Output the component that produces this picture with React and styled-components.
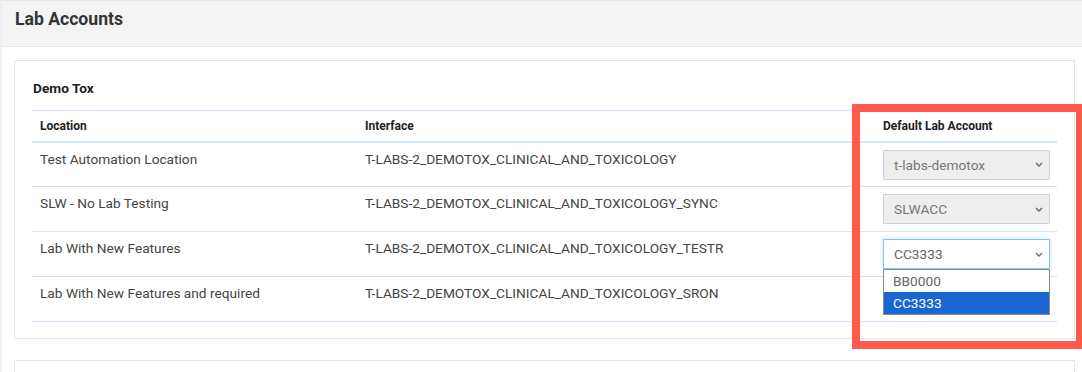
import React from "react";
import styled, { createGlobalStyle } from "styled-components";

const GlobalStyle = createGlobalStyle`
  * { box-sizing: border-box; }
  body {
    margin: 0;
    background: #fff;
    font-family: Roboto, "Liberation Sans", Arial, sans-serif;
    color: #333;
  }
`;

const rows = [
  {
    location: "Test Automation Location",
    iface: "T-LABS-2_DEMOTOX_CLINICAL_AND_TOXICOLOGY",
    account: "t-labs-demotox",
    state: "disabled",
  },
  {
    location: "SLW - No Lab Testing",
    iface: "T-LABS-2_DEMOTOX_CLINICAL_AND_TOXICOLOGY_SYNC",
    account: "SLWACC",
    state: "disabled",
  },
  {
    location: "Lab With New Features",
    iface: "T-LABS-2_DEMOTOX_CLINICAL_AND_TOXICOLOGY_TESTR",
    account: "CC3333",
    state: "open",
    options: ["BB0000", "CC3333"],
  },
  {
    location: "Lab With New Features and required",
    iface: "T-LABS-2_DEMOTOX_CLINICAL_AND_TOXICOLOGY_SRON",
  },
];

function Chevron() {
  return (
    <svg width="8" height="5" viewBox="0 0 8 5" fill="none">
      <path d="M1 1l3 3 3-3" stroke="#666" strokeWidth="1.4" />
    </svg>
  );
}

function AccountSelect({ value, state, options }) {
  return (
    <SelectWrap>
      <SelectBox $state={state}>
        <span>{value}</span>
        <Chevron />
      </SelectBox>
      {state === "open" && (
        <OptionList>
          {options.map((o) => (
            <Option key={o} $selected={o === value}>
              {o}
            </Option>
          ))}
        </OptionList>
      )}
    </SelectWrap>
  );
}

export default function App() {
  return (
    <Page>
      <GlobalStyle />
      <Header>
        <Title>Lab Accounts</Title>
      </Header>

      <Card>
        <CardTitle>Demo Tox</CardTitle>
        <Table>
          <colgroup>
            <col style={{ width: 325 }} />
            <col style={{ width: 518 }} />
            <col />
          </colgroup>
          <thead>
            <tr>
              <Th>Location</Th>
              <Th>Interface</Th>
              <Th>Default Lab Account</Th>
            </tr>
          </thead>
          <tbody>
            {rows.map((r) => (
              <Tr key={r.location}>
                <Td>{r.location}</Td>
                <Td>{r.iface}</Td>
                <Td>
                  {r.account && (
                    <AccountSelect
                      value={r.account}
                      state={r.state}
                      options={r.options}
                    />
                  )}
                </Td>
              </Tr>
            ))}
          </tbody>
        </Table>
      </Card>

      <EmptyCard />

      <Highlight />
    </Page>
  );
}

const Page = styled.div`
  position: relative;
  height: 372px;
  overflow: hidden;
  border-left: 2px solid #efefef;
`;

const Header = styled.div`
  height: 47px;
  padding: 8px 13px 0;
  background: #f4f4f4;
  border-top: 1px solid #e6e6e6;
  border-bottom: 1px solid #e6e6e6;
`;

const Title = styled.h1`
  margin: 0;
  font-size: 17.6px;
  line-height: 20px;
  font-weight: 700;
  color: #333;
`;

const Card = styled.div`
  margin: 13px 7px 0 12px;
  padding: 18px 17px 16px;
  border: 1px solid #e6e6e6;
  background: #fff;
`;

const CardTitle = styled.h2`
  margin: 0 0 13px 1px;
  font-size: 13.7px;
  line-height: 18px;
  font-weight: 700;
  color: #222;
`;

const Table = styled.table`
  width: 100%;
  border-collapse: collapse;
  table-layout: fixed;
`;

const Th = styled.th`
  height: 31px;
  padding: 0 8px;
  text-align: left;
  font-size: 12px;
  font-weight: 700;
  color: #222;
  border-top: 1px solid #d3e4f8;
  border-bottom: 2px solid #d3e4f8;
`;

const Tr = styled.tr`
  height: 45px;
  border-bottom: 1px solid #d3e4f8;
`;

const Td = styled.td`
  padding: 7px 8px 0;
  vertical-align: top;
  font-size: 13.7px;
  line-height: 18px;
  color: #444;
  white-space: nowrap;
`;

const SelectWrap = styled.div`
  position: relative;
  width: 167px;
`;

const SelectBox = styled.div`
  height: 30px;
  display: flex;
  align-items: center;
  justify-content: space-between;
  padding: 0 6px 0 10px;
  font-size: 13.7px;
  border-radius: 1px;
  color: ${(p) => (p.$state === "disabled" ? "#777" : "#666")};
  background: ${(p) => (p.$state === "disabled" ? "#eeeeee" : "#fff")};
  border: 1px solid ${(p) => (p.$state === "disabled" ? "#d2d2d2" : "#8ec1f5")};
  box-shadow: ${(p) =>
    p.$state === "open" ? "0 0 3px 1px rgba(80, 150, 230, 0.25)" : "none"};
`;

const OptionList = styled.div`
  position: absolute;
  top: 30px;
  left: 0;
  width: 100%;
  background: #fff;
  border: 1px solid #8a8a8a;
  z-index: 2;
`;

const Option = styled.div`
  height: 22px;
  padding-left: 9px;
  display: flex;
  align-items: center;
  font-size: 13.7px;
  color: ${(p) => (p.$selected ? "#fff" : "#666")};
  background: ${(p) => (p.$selected ? "#1967d2" : "#fff")};
`;

const EmptyCard = styled.div`
  margin: 21px 7px 0 12px;
  height: 60px;
  border: 1px solid #e6e6e6;
`;

const Highlight = styled.div`
  position: absolute;
  left: 850px;
  top: 104px;
  width: 232px;
  height: 245px;
  border: 8px solid #ff5a4b;
  pointer-events: none;
  z-index: 3;
`;
